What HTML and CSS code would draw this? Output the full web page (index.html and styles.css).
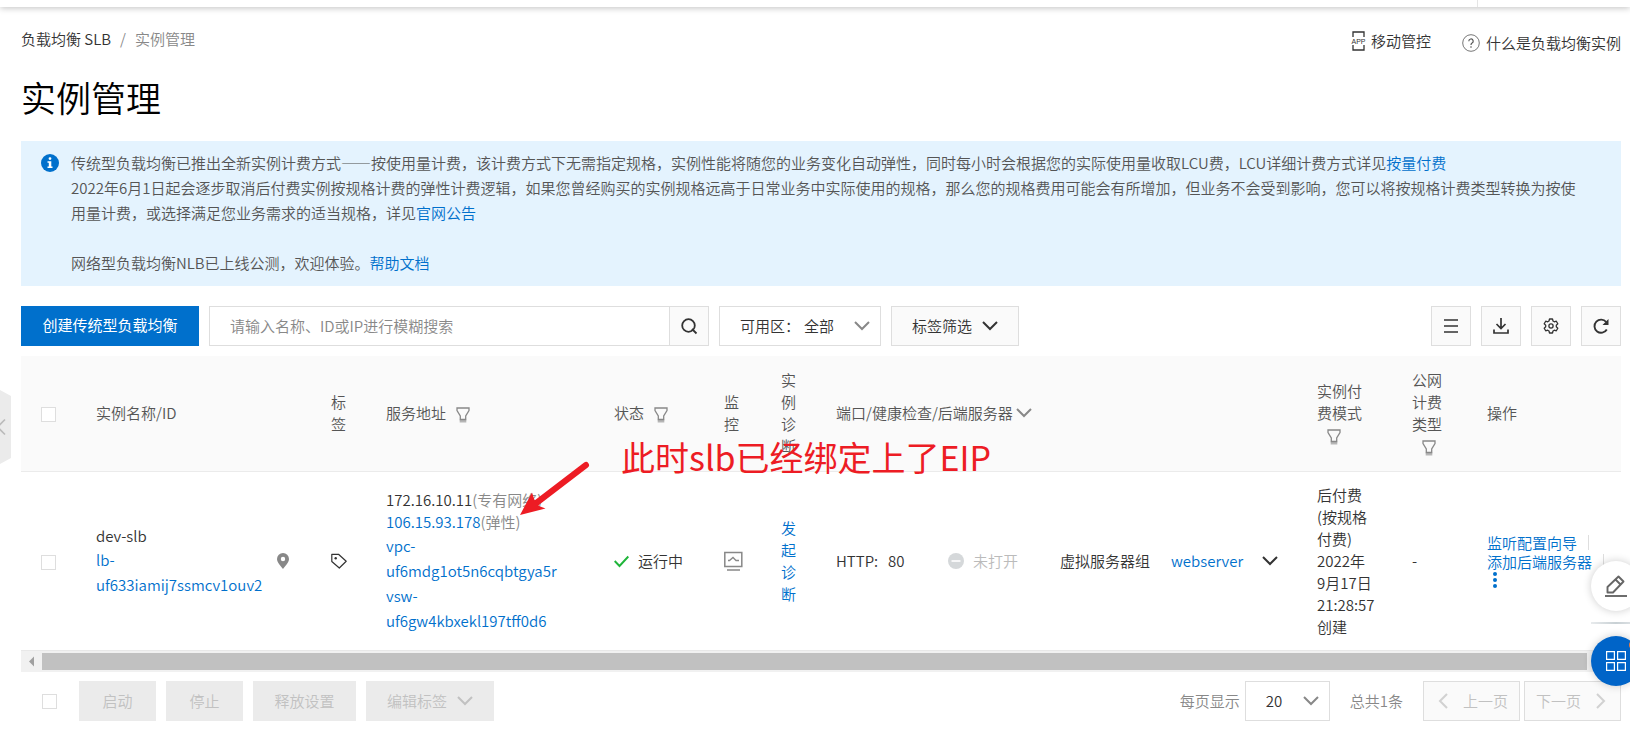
FILE: index.html
```html
<!DOCTYPE html>
<html lang="zh-CN">
<head>
<meta charset="utf-8">
<title>实例管理</title>
<link rel="stylesheet" href="styles.css">
</head>
<body>
<svg class="defs" aria-hidden="true">
  <symbol id="chevron" viewBox="0 0 16 16"><path d="M1 4l7 7 7-7" fill="none" stroke="currentColor" stroke-width="2"/></symbol>
  <symbol id="funnel" viewBox="0 0 14 16"><path d="M1 1h12v2.500L9.700 9v3.500H4.300V9L1 3.500z" fill="none" stroke="currentColor" stroke-width="1.300"/><path d="M3.700 12.500h6.600v3H3.700z" fill="currentColor" opacity=".6"/></symbol>
</svg>

<div class="topbar"><span class="topbar-sep"></span></div>

<main class="page">
  <div class="head">
    <nav class="crumbs" aria-label="面包屑"><a href="#">负载均衡 SLB</a><span class="slash">/</span><span class="here">实例管理</span></nav>
    <div class="head-links">
      <a href="#" class="mobile">
        <svg width="15" height="20" viewBox="0 0 15 20"><path d="M2 6V1h11v5M2 14v5h11v-5" fill="none" stroke="currentColor" stroke-width="1.300"/><text x="7.500" y="12.500" text-anchor="middle" class="app-text">APP</text></svg>移动管控</a>
      <a href="#" class="what">
        <svg width="18" height="18" viewBox="0 0 18 18"><circle cx="9" cy="9" r="8.300" fill="none" stroke="#777"/><path d="M6.800 7.200a2.200 2.200 0 1 1 3.300 1.900c-.8.500-1.100.9-1.100 1.900" fill="none" stroke="#555" stroke-width="1.200"/><circle cx="9" cy="13" r=".8" fill="#555"/></svg>什么是负载均衡实例</a>
    </div>
  </div>
  <h1>实例管理</h1>

  <section class="notice">
    <svg class="notice-icon" width="18" height="18" viewBox="0 0 18 18"><circle cx="9" cy="9" r="9" fill="#0070cc"/><path d="M9 3.200a1.400 1.400 0 1 1 0 2.800 1.400 1.400 0 0 1 0-2.800zM6.500 7.200h3.800v5.300h1.200V14h-5v-1.500h1.300V8.700H6.500z" fill="#fff"/></svg>
    <div>
      <p>传统型负载均衡已推出全新实例计费方式——按使用量计费，该计费方式下无需指定规格，实例性能将随您的业务变化自动弹性，同时每小时会根据您的实际使用量收取LCU费，LCU详细计费方式详见<a href="#">按量付费</a></p>
      <p>2022年6月1日起会逐步取消后付费实例按规格计费的弹性计费逻辑，如果您曾经购买的实例规格远高于日常业务中实际使用的规格，那么您的规格费用可能会有所增加，但业务不会受到影响，您可以将按规格计费类型转换为按使用量计费，或选择满足您业务需求的适当规格，详见<a href="#">官网公告</a></p>
      <p class="gap-above">网络型负载均衡NLB已上线公测，欢迎体验。<a href="#">帮助文档</a></p>
    </div>
  </section>

  <div class="toolbar">
    <button class="btn primary">创建传统型负载均衡</button>
    <form class="search">
      <input type="text" aria-label="搜索" placeholder="请输入名称、ID或IP进行模糊搜索">
      <button type="button" aria-label="搜索"><svg width="16" height="16" viewBox="0 0 16 16"><circle cx="7.500" cy="7.500" r="6.300" fill="none" stroke="currentColor" stroke-width="1.800"/><path d="M11 11l4.500 4.500" stroke="currentColor" stroke-width="1.800"/></svg></button>
    </form>
    <div class="select zone">
      <label for="zone">可用区：</label>
      <select id="zone"><option>全部</option></select>
      <svg width="16" height="16"><use href="#chevron"/></svg>
    </div>
    <button class="btn with-arrow">标签筛选<svg width="16" height="16"><use href="#chevron"/></svg></button>
    <div class="tools">
      <button class="btn icon" aria-label="列表"><svg width="14" height="14" viewBox="0 0 14 14"><path d="M0 1h14M0 7h14M0 13h14" stroke="currentColor" stroke-width="1.600"/></svg></button>
      <button class="btn icon" aria-label="下载"><svg width="16" height="16" viewBox="0 0 16 16"><path d="M8 0v10M3.500 6L8 10.500 12.500 6M1 11.500V15h14v-3.500" fill="none" stroke="currentColor" stroke-width="1.700"/></svg></button>
      <button class="btn icon" aria-label="设置"><svg width="16" height="16" viewBox="0 0 16 16"><path d="M6.500 1h3l.5 2 1.300.8 2-.6 1.500 2.600L13.300 7.200v1.600l1.500 1.400-1.500 2.600-2-.6-1.300.8-.5 2h-3L6 13l-1.300-.8-2 .6-1.500-2.600 1.500-1.400V7.200L1.200 5.800l1.500-2.600 2 .6L6 3z" fill="none" stroke="currentColor" stroke-width="1.300" stroke-linejoin="round"/><circle cx="8" cy="8" r="2.100" fill="none" stroke="currentColor" stroke-width="1.300"/></svg></button>
      <button class="btn icon" aria-label="刷新"><svg width="16" height="16" viewBox="0 0 16 16"><path d="M13.200 4A6.600 6.600 0 1 0 13.800 11.500" fill="none" stroke="currentColor" stroke-width="1.900"/><path d="M15.500 1v6h-6z" fill="currentColor"/></svg></button>
    </div>
  </div>

  <div class="table-box">
  <table>
    <colgroup><col class="c-check"><col class="c-name"><col class="c-tag"><col class="c-addr"><col class="c-state"><col class="c-mon"><col class="c-diag"><col><col class="c-pay"><col class="c-net"><col class="c-ops"></colgroup>
    <thead>
      <tr>
        <th><input type="checkbox" aria-label="全选"></th>
        <th>实例名称/ID</th>
        <th>标签</th>
        <th><span class="filter">服务地址<svg width="14" height="16"><use href="#funnel"/></svg></span></th>
        <th><span class="filter">状态<svg width="14" height="16"><use href="#funnel"/></svg></span></th>
        <th>监控</th>
        <th>实例诊断</th>
        <th><span class="sort">端口/健康检查/后端服务器<svg width="16" height="16"><use href="#chevron"/></svg></span></th>
        <th>实例付费模式<span class="filter under"><svg width="14" height="16"><use href="#funnel"/></svg></span></th>
        <th>公网计费类型<span class="filter under"><svg width="14" height="16"><use href="#funnel"/></svg></span></th>
        <th>操作</th>
      </tr>
    </thead>
    <tbody>
      <tr>
        <td><input type="checkbox" aria-label="选择 dev-slb"></td>
        <td>
          <div class="name">
            <div><div>dev-slb</div><a href="#">lb-<br>uf633iamij7ssmcv1ouv2</a></div>
            <svg width="12" height="16" viewBox="0 0 12 16"><path d="M6 0a6 6 0 0 1 6 6c0 3.500-3.500 6.500-6 10C3.500 12.500 0 9.500 0 6a6 6 0 0 1 6-6zm0 3.800a2.200 2.200 0 1 0 0 4.400 2.200 2.200 0 0 0 0-4.400z" fill="#888"/></svg>
          </div>
        </td>
        <td><svg class="block" width="16" height="16" viewBox="0 0 16 16"><path d="M.8 1.300h6.700l7.700 7L8.300 15 .8 8.500z" fill="none" stroke="#333" stroke-width="1.200" stroke-linejoin="round"/><circle cx="4.700" cy="5.200" r="1.200" fill="#333"/></svg></td>
        <td class="addr">
          <div>172.16.10.11<span>(专有网络)</span></div>
          <div><a href="#">106.15.93.178</a><span>(弹性)</span></div>
          <a class="id" href="#">vpc-<br>uf6mdg1ot5n6cqbtgya5r</a>
          <a class="id" href="#">vsw-<br>uf6gw4kbxekl197tff0d6</a>
        </td>
        <td><span class="state"><svg width="15" height="16" viewBox="0 0 15 16"><path d="M.7 8l4.800 5L14.300 3.500" fill="none" stroke="#1fb53a" stroke-width="1.900"/></svg>运行中</span></td>
        <td><svg class="block" width="19" height="20" viewBox="0 0 19 20"><path d="M.8 1.500h17v14H.8zM3 19h13" fill="none" stroke="#888" stroke-width="1.500"/><path d="M4 9.500h1.500L9 6.500l3 3h3" fill="none" stroke="#888" stroke-width="1.300"/></svg></td>
        <td><a href="#">发起诊断</a></td>
        <td>
          <div class="ports">
            <span>HTTP:</span><span>80</span>
            <span class="off"><svg width="16" height="16" viewBox="0 0 16 16"><circle cx="8" cy="8" r="8" fill="#d5d8da"/><path d="M3.500 8h9" stroke="#fff" stroke-width="1.600"/></svg>未打开</span>
            <span>虚拟服务器组</span><a href="#">webserver</a>
            <button class="expand" aria-label="展开"><svg width="16" height="16"><use href="#chevron"/></svg></button>
          </div>
        </td>
        <td class="pay">后付费<br>(按规格<br>付费)<br>2022年<br>9月17日<br>21:28:57<br>创建</td>
        <td>-</td>
        <td>
          <div class="ops">
            <a href="#">监听配置向导</a>
            <a href="#">添加后端服务器</a>
            <button aria-label="更多"><svg width="16" height="18" viewBox="0 0 16 18"><g fill="#0070cc"><circle cx="8" cy="3" r="2"/><circle cx="8" cy="9" r="2"/><circle cx="8" cy="15" r="2"/></g></svg></button>
          </div>
        </td>
      </tr>
    </tbody>
  </table>
  <div class="scroll"><svg width="21" height="17" viewBox="0 0 21 17"><path d="M13 3.500v10L8 8.500z" fill="#a0a0a0"/></svg><span class="thumb"></span><span class="scroll-end"></span></div>
  </div>

  <footer class="foot">
    <input type="checkbox" aria-label="全选">
    <div class="batch">
      <button class="btn off-btn" disabled>启动</button>
      <button class="btn off-btn" disabled>停止</button>
      <button class="btn off-btn tight" disabled>释放设置</button>
      <button class="btn off-btn with-arrow" disabled>编辑标签<svg width="16" height="16"><use href="#chevron"/></svg></button>
    </div>
    <div class="paging">
      <label for="size">每页显示</label>
      <div class="select size"><select id="size"><option>20</option></select><svg width="16" height="16"><use href="#chevron"/></svg></div>
      <span class="total">总共1条</span>
      <button class="btn page-btn" disabled><svg class="to-left" width="16" height="16"><use href="#chevron"/></svg>上一页</button>
      <button class="btn page-btn" disabled>下一页<svg class="to-right" width="16" height="16"><use href="#chevron"/></svg></button>
    </div>
  </footer>
</main>

<button class="handle" aria-label="收起导航"><svg width="11" height="74" viewBox="0 0 11 74"><path d="M0 0l11 6v62L0 74z" fill="#ebebeb"/><path d="M5 29.500L-2.500 37 5 44.500" fill="none" stroke="#bbb" stroke-width="1.700"/></svg></button>

<aside class="float">
  <button class="round" aria-label="反馈"><svg width="22" height="22" viewBox="0 0 22 22"><path d="M2.500 17.500v-5.500L13.500 1.500l5 5L8 17.500zM10.500 4.500l5 5" fill="none" stroke="#666" stroke-width="1.900" stroke-linejoin="round"/><path d="M0 21h22" stroke="#666" stroke-width="1.900"/></svg></button>
  <span class="float-line"></span>
  <button class="round blue" aria-label="应用"><svg width="20" height="20" viewBox="0 0 20 20"><path d="M.6.600h7.800v7.800H.6zM11.600.600h7.800v7.800h-7.800zM.6 11.600h7.800v7.800H.6zM11.600 11.600h7.800v7.800h-7.800z" fill="none" stroke="#fff" stroke-width="1.200"/></svg><span class="dot"></span></button>
</aside>

<div class="note">此时slb已经绑定上了EIP</div>
<svg class="arrow" width="70" height="56" viewBox="0 0 70 56"><path d="M66 4L15 43" stroke="#ed1c24" stroke-width="6" stroke-linecap="round"/><path d="M0 54L12 31.500l2.500 7.500 4.500 6 6.500 2.500z" fill="#ed1c24"/></svg>
</body>
</html>
```
FILE: styles.css
```css
* { box-sizing: border-box; }
body {
  margin: 0;
  background: #fff;
  color: #333;
  font-family: "Noto Sans CJK SC", sans-serif;
  font-weight: 350;
  font-size: 15px;
  line-height: 22px;
  overflow: hidden;
}
a { color: #0070cc; text-decoration: none; }
p, h1 { margin: 0; }
button, input, select { font: inherit; color: inherit; }
button { padding: 0; border: 0; background: none; }
svg { flex: none; overflow: visible; }
.defs { position: absolute; width: 0; height: 0; }

.topbar {
  display: flex;
  justify-content: flex-end;
  height: 7px;
  padding-right: 152px;
  box-shadow: 0 1px 6px rgba(0, 0, 0, .25);
}
.topbar-sep { width: 1px; background: #e5e5e5; }

.page { padding: 21px 9px 0 21px; }
.head { display: flex; justify-content: space-between; }
.crumbs a, .head-links a { color: #333; }
.slash { margin: 0 9px; color: #888; }
.here { color: #888; }
.head-links { display: flex; gap: 31px; }
.head-links a { display: flex; align-items: center; gap: 6px; height: 25px; }
.head-links .mobile { gap: 5px; }
.head-links .what { height: 29px; }
.app-text { font: 400 7px "Liberation Sans", sans-serif; fill: currentColor; }
h1 { margin: 15px 0 19px; font-size: 35px; font-weight: 350; line-height: 50px; color: #000; }

.notice {
  display: flex;
  gap: 12px;
  padding: 9px 40px 11px 20px;
  background: #e4f3fe;
  color: #555;
  line-height: 25px;
}
.notice-icon { margin-top: 4px; }
.gap-above { margin-top: 25px; }

.toolbar { display: flex; gap: 10px; margin: 20px 0 10px; }
.btn {
  display: flex;
  align-items: center;
  justify-content: center;
  height: 40px;
  padding: 0 20px;
  border: 1px solid #dedede;
  background: #fafafa;
  white-space: nowrap;
}
.primary { width: 178px; padding-bottom: 2px; border-color: #0070cc; background: #0070cc; color: #fff; font-weight: 400; }
.with-arrow { width: 128px; gap: 10px; }
.icon { width: 40px; padding: 0; }
.search { display: flex; width: 500px; height: 40px; border: 1px solid #dedede; }
.search input { flex: 1; min-width: 0; padding: 0 20px; border: 0; background: none; }
.search input::placeholder { color: #888; opacity: 1; }
.search button {
  display: flex;
  align-items: center;
  justify-content: center;
  width: 39px;
  border-left: 1px solid #dedede;
  background: #fafafa;
}
.select { display: flex; align-items: center; height: 40px; border: 1px solid #dedede; color: #333; }
.select select { flex: 1; min-width: 0; border: 0; padding: 0; appearance: none; background: none; }
.select svg { color: #888; pointer-events: none; }
.zone { width: 162px; padding: 0 10px 0 20px; gap: 4px; }
.size { width: 85px; padding: 0 10px 0 20px; margin-left: 5px; }
.tools { display: flex; gap: 10px; margin-left: auto; }

table { width: 100%; table-layout: fixed; border-collapse: collapse; }
th, td { padding: 10px 20px; text-align: left; font-weight: 350; }
th { height: 115px; background: #fafafa; border-bottom: 1px solid #ebebeb; color: #555; }
td { height: 179px; }
th:nth-child(n+9), td:nth-child(n+9) { padding-right: 15px; }
.c-check { width: 55px; }
.c-name { width: 235px; }
.c-tag { width: 55px; }
.c-addr { width: 228px; }
.c-state { width: 110px; }
.c-mon { width: 57px; }
.c-diag { width: 55px; }
.c-pay { width: 95px; }
.c-net { width: 75px; }
.c-ops { width: 154px; }
th:nth-child(9) { padding-right: 25px; }
th:nth-child(8), td:nth-child(8) { padding-right: 0; }
.block { display: block; }
input[type="checkbox"] {
  display: block;
  width: 15px;
  height: 15px;
  margin: 0;
  border: 1px solid #dedede;
  background: #fff;
  appearance: none;
}
th input[type="checkbox"], td input[type="checkbox"] { margin-top: 3px; }
.filter { display: flex; align-items: center; gap: 10px; white-space: nowrap; }
.filter svg { margin-top: 3px; color: #888; }
.under { height: 22px; padding-left: 10px; }
.sort { display: flex; align-items: center; gap: 3px; color: #555; }
.sort svg { color: #888; }
.name { display: flex; align-items: center; justify-content: space-between; padding-right: 2px; }
.name a { display: block; line-height: 25px; }
.addr { white-space: nowrap; }
.addr span { color: #888; }
.id { display: block; line-height: 25px; }
.state { display: flex; align-items: center; gap: 9px; white-space: nowrap; }
.ports {
  display: grid;
  grid-template-columns: 52px 60px 112px 111px 91px auto;
  align-items: center;
  justify-content: start;
}
.off { display: flex; align-items: center; gap: 9px; color: #bbb; }
.expand { display: flex; }
.pay { white-space: nowrap; }
.ops { display: flex; flex-direction: column; align-items: flex-start; line-height: 19px; white-space: nowrap; }
.ops a { display: flex; align-items: center; gap: 11px; }
.ops a::after { content: ""; width: 1px; height: 15px; background: #dedede; }
.ops button { display: flex; }

.scroll {
  display: flex;
  align-items: center;
  height: 22px;
  border-top: 1px solid #e8e8e8;
  background: #f1f1f1;
}
.thumb { flex: 1; height: 17px; background: #c1c1c1; }
.scroll-end { width: 34px; }

.foot { display: flex; align-items: center; padding: 9px 0 0 21px; }
.batch { display: flex; gap: 10px; margin-left: 22px; }
.off-btn { width: 77px; border-color: #ebebeb; background: #ebebeb; color: #c1c1c1; }
.tight { width: 103px; }
.off-btn.with-arrow { width: 128px; }
.paging { display: flex; align-items: center; margin-left: auto; color: #888; }
.total { margin: 0 20px; }
.page-btn { width: 97px; gap: 12px; padding: 0; color: #c1c1c1; }
.page-btn svg { opacity: .7; }
.page-btn + .page-btn { margin-left: 4px; }
.to-left { transform: rotate(90deg); }
.to-right { transform: rotate(-90deg); }

.handle { position: absolute; left: 0; top: 390px; width: 11px; height: 74px; overflow: hidden; }
.handle svg { display: block; overflow: hidden; }
.float { position: fixed; right: -11px; bottom: 68px; display: flex; flex-direction: column; width: 50px; }
.round {
  position: relative;
  display: flex;
  align-items: center;
  justify-content: center;
  width: 50px;
  height: 50px;
  border-radius: 50%;
  background: #fff;
  box-shadow: 0 0 8px rgba(0, 0, 0, .2);
}
.blue { background: #0064c8; }
.dot { position: absolute; right: 2px; top: 4px; width: 10px; height: 10px; border-radius: 50%; background: #f27d3c; }
.float-line { height: 2px; margin: 11px 0 12px; background: linear-gradient(90deg, #e8ebed, #c8d0d4, #e8ebed); }
.note { position: absolute; left: 621px; top: 432px; color: #ed1c24; font-size: 34px; font-weight: 400; line-height: 50px; }
.arrow { position: absolute; left: 520px; top: 461px; }
```
